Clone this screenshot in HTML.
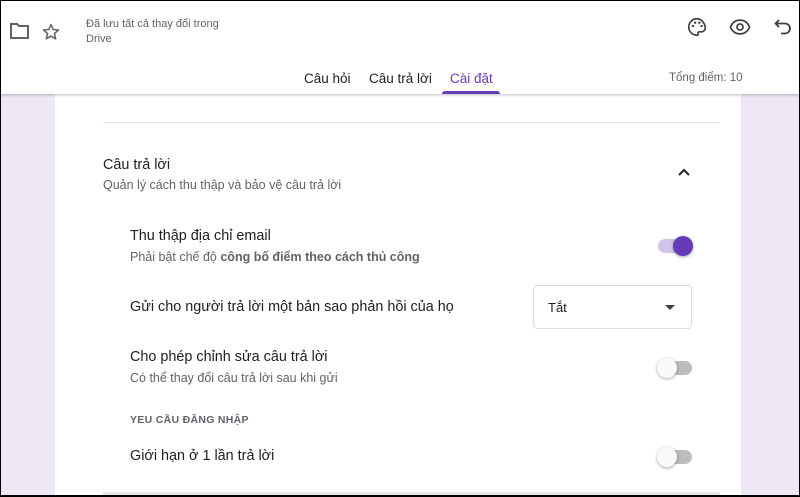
<!DOCTYPE html>
<html><head><meta charset="utf-8"><style>
*{margin:0;padding:0;box-sizing:border-box}
body{width:800px;height:497px;overflow:hidden;background:#ede7f6;font-family:"Liberation Sans","Noto Sans CJK SC",sans-serif;position:relative;color:#202124}
.frame{position:absolute;left:0;top:0;width:800px;height:497px;border:1px solid #000;border-width:1px 1px 2px 1px;pointer-events:none;z-index:10}
.hdr{position:absolute;left:0;top:0;width:800px;height:94px;background:#fff;box-shadow:0 1px 3px rgba(0,0,0,.25);z-index:5}
.card{position:absolute;left:55px;top:94px;width:686px;height:403px;background:#fff}
.t{position:absolute;white-space:nowrap}
.sub{color:#5f6368;font-size:12.5px}
.tog{position:absolute;width:34px;height:14px;border-radius:7px}
.knob{position:absolute;width:20px;height:20px;border-radius:50%;top:-3px;box-shadow:0 1px 3px rgba(0,0,0,.35)}
.big{font-size:14.4px}
</style></head><body>
<div class="hdr">
<svg style="position:absolute;left:9px;top:21px" width="22" height="20" viewBox="0 0 22 20"><path d="M2 3h6l2 2h9v12H2z" fill="none" stroke="#5f6368" stroke-width="2"/></svg>
<svg style="position:absolute;left:41px;top:22px" width="20" height="20" viewBox="0 0 24 24"><path d="M12 3l2.6 6 6.4.6-4.9 4.3 1.5 6.3L12 16.9 6.4 20.2l1.5-6.3L3 9.6 9.4 9z" fill="none" stroke="#5f6368" stroke-width="1.8" stroke-linejoin="round"/></svg>
<div class="t" style="left:86px;top:17px;font-size:11px;color:#5f6368;line-height:15px">Đã lưu tất cả thay đổi trong<br>Drive</div>
<svg style="position:absolute;left:686px;top:16px" width="22" height="22" viewBox="0 0 24 24"><path d="M12 3a9 9 0 0 0 0 18c1.2 0 1.6-.8 1.2-1.6-.5-1 0-2.2 1.3-2.2H17a4 4 0 0 0 4-4c0-5-4-10.2-9-10.2z" fill="none" stroke="#3c4043" stroke-width="1.8"/><circle cx="7.5" cy="11" r="1.3" fill="#3c4043"/><circle cx="10" cy="7.3" r="1.3" fill="#3c4043"/><circle cx="14.5" cy="7.3" r="1.3" fill="#3c4043"/><circle cx="17" cy="11" r="1.3" fill="#3c4043"/></svg>
<svg style="position:absolute;left:729px;top:17px" width="22" height="20" viewBox="0 0 24 20"><path d="M1.5 10C4 4.5 8 2.5 12 2.5S20 4.5 22.5 10C20 15.5 16 17.5 12 17.5S4 15.5 1.5 10z" fill="none" stroke="#3c4043" stroke-width="1.8"/><circle cx="12" cy="10" r="3.3" fill="none" stroke="#3c4043" stroke-width="1.8"/></svg>
<svg style="position:absolute;left:773px;top:17px" width="20" height="20" viewBox="0 0 20 20"><path d="M6 3L2.5 6.5 6 10M3 6.5h9a5 5 0 0 1 0 10H8" fill="none" stroke="#3c4043" stroke-width="1.8"/></svg>
<div class="t" style="left:304px;top:71px;font-size:13.5px">Câu hỏi</div>
<div class="t" style="left:369px;top:71px;font-size:13.5px">Câu trả lời</div>
<div class="t" style="left:450px;top:71px;font-size:13.5px;color:#673ab7">Cài đặt</div>
<div style="position:absolute;left:442px;top:91px;width:58px;height:3px;background:#673ab7;border-radius:3px 3px 0 0"></div>
<div class="t" style="left:669px;top:72px;font-size:11.5px;color:#5f6368">Tổng điểm: 10</div>
</div>
<div class="card">
<div style="position:absolute;left:48px;top:28px;width:617px;height:1px;background:#e0e0e0"></div>
<div class="t big" style="left:48px;top:63px">Câu trả lời</div>
<div class="t sub" style="left:48px;top:84px">Quản lý cách thu thập và bảo vệ câu trả lời</div>
<svg style="position:absolute;left:622px;top:73px" width="14" height="10" viewBox="0 0 14 10"><path d="M2 8l5-5 5 5" fill="none" stroke="#202124" stroke-width="2"/></svg>
<div class="t big" style="left:75px;top:134px">Thu thập địa chỉ email</div>
<div class="t sub" style="left:75px;top:156px">Phải bật chế độ <b style="color:#5f6368">công bố điểm theo cách thủ công</b></div>
<div class="tog" style="left:603px;top:145px;background:#d1c4e9"><div class="knob" style="left:15px;background:#673ab7"></div></div>
<div class="t big" style="left:75px;top:205px">Gửi cho người trả lời một bản sao phản hồi của họ</div>
<div style="position:absolute;left:478px;top:191px;width:159px;height:44px;border:1px solid #dadce0;border-radius:4px"></div>
<div class="t" style="left:493px;top:206px;font-size:13px">Tắt</div>
<div style="position:absolute;left:610px;top:211px;border:5px solid transparent;border-top:5px solid #3c4043;border-bottom:0"></div>
<div class="t big" style="left:75px;top:255px">Cho phép chỉnh sửa câu trả lời</div>
<div class="t sub" style="left:75px;top:277px">Có thể thay đổi câu trả lời sau khi gửi</div>
<div class="tog" style="left:603px;top:267px;background:#bdbdbd"><div class="knob" style="left:-1px;background:#fafafa"></div></div>
<div class="t" style="left:75px;top:320px;font-size:10.5px;color:#5f6368;letter-spacing:.3px;font-weight:bold">YEU CẦU ĐĂNG NHẬP</div>
<div class="t big" style="left:75px;top:354px">Giới hạn ở 1 lần trả lời</div>
<div class="tog" style="left:603px;top:356px;background:#bdbdbd"><div class="knob" style="left:-1px;background:#fafafa"></div></div>
<div style="position:absolute;left:48px;top:398px;width:617px;height:3px;background:#e8e8e8"></div>
</div>
<div class="frame"></div>
</body></html>
